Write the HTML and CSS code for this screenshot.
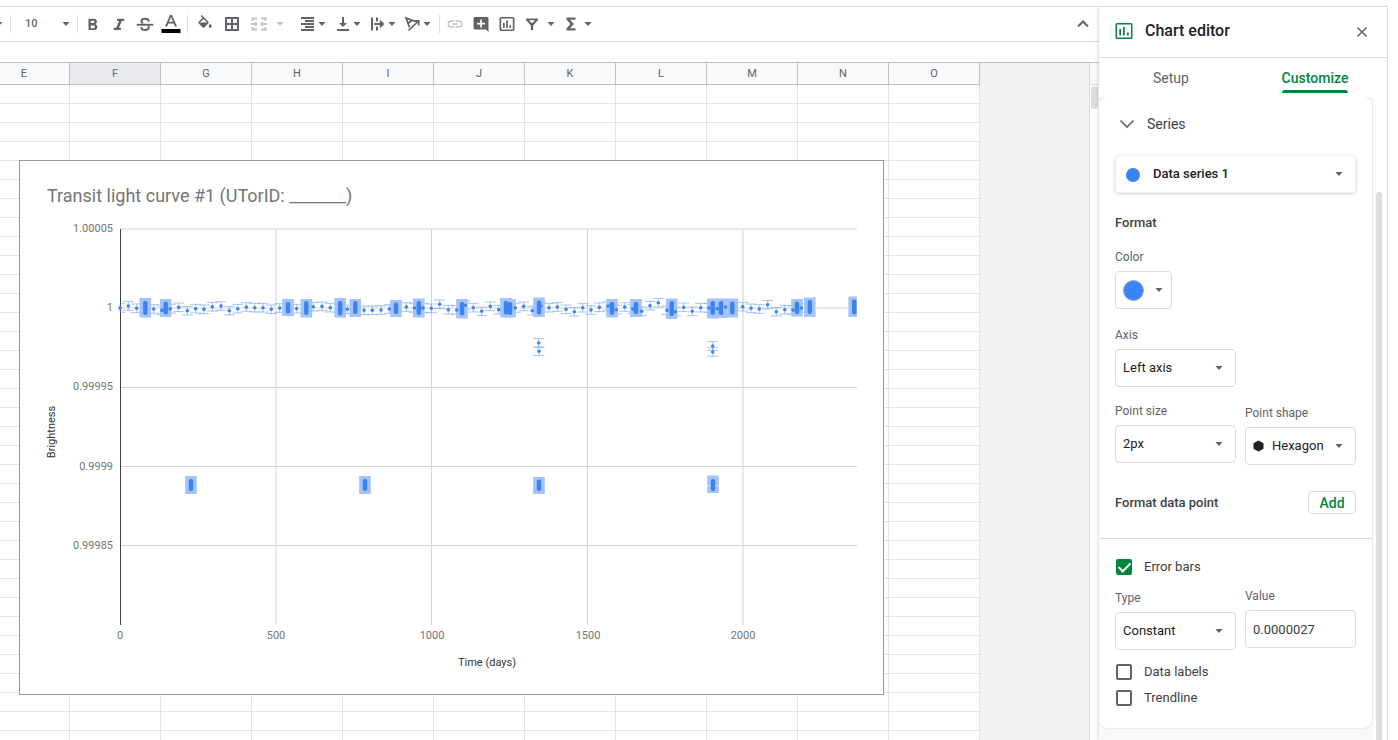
FILE: index.html
```html
<!DOCTYPE html>
<html lang="en">
<head>
<meta charset="utf-8">
<title>Transit light curve</title>
<link rel="stylesheet" href="styles.css">
</head>
<body>
<svg class="defs" width="0" height="0" aria-hidden="true">
  <symbol id="caret" viewBox="0 0 8 4"><path d="M0.5 0h7L4 4z"/></symbol>
</svg>
<div class="app">
  <main class="main">
    <div class="toolbar" role="toolbar" aria-label="Formatting">
      <button class="tool tool-edge" aria-label="Font"><svg class="caret"><use href="#caret"/></svg></button>
      <span class="sep"></span>
      <button class="font-size" aria-label="Font size"><span>10</span><svg class="caret"><use href="#caret"/></svg></button>
      <span class="sep"></span>
      <button class="tool" aria-label="Bold"><svg class="icon" viewBox="0 0 24 24"><path d="M15.6 11.79c.97-.67 1.65-1.77 1.65-2.79 0-2.26-1.75-4-4-4H6v15h8.04c2.09 0 3.71-1.7 3.71-3.79 0-1.52-.86-2.82-2.15-3.42zM9 7.5h3.5c.83 0 1.5.67 1.5 1.5s-.67 1.5-1.5 1.5H9v-3zm4 10H9V14h4c.83 0 1.5.67 1.5 1.5s-.67 2-1.5 2z"/></svg></button>
      <button class="tool" aria-label="Italic"><svg class="icon" viewBox="0 0 24 24"><path d="M9.500 5v3h2.600l-3.800 9H5v3h9.500v-3h-2.600l3.800-9H19V5z"/></svg></button>
      <button class="tool" aria-label="Strikethrough"><svg class="icon" viewBox="0 0 24 24" fill="none" stroke="currentColor" stroke-width="2.500"><path d="M1 13h22"/><path d="M17 9C17 6.500 15 5 12 5S7.200 6.500 7.200 8.200c0 1.200.8 2 2.300 2.600M7 16c0 2.600 2 4 5 4s5-1.400 5-3.600c0-1-.3-1.600-.8-2.200"/></svg></button>
      <button class="tool" aria-label="Text color"><svg class="icon tall" viewBox="0 0 20 20"><path d="M9 1h2l5 11.500h-2.100L12.700 9.500H7.300L6.100 12.500H4zM8 7.700h4L10 2.900z"/><path class="ink" d="M.5 15h19v4H.5z"/></svg></button>
      <span class="sep"></span>
      <div class="group fills">
        <button class="tool" aria-label="Fill color"><svg class="icon" viewBox="0 0 24 24"><path d="M16.560 8.940L7.620 0 6.210 1.410l2.380 2.380-5.150 5.150c-.59.59-.59 1.540 0 2.120l5.500 5.500c.29.29.68.440 1.060.440s.77-.15 1.060-.440l5.500-5.500c.59-.58.59-1.530 0-2.120zM5.210 10L10 5.210 14.790 10zM19 11.500s-2 2.170-2 3.500c0 1.100.9 2 2 2s2-.9 2-2c0-1.330-2-3.500-2-3.500z"/></svg></button>
        <button class="tool" aria-label="Borders"><svg class="icon" viewBox="0 0 18 18" fill="none" stroke="currentColor" stroke-width="2"><path d="M3 3h12v12H3zM9 3v12M3 9h12"/></svg></button>
        <button class="tool faded" aria-label="Merge cells"><svg class="icon" viewBox="0 0 18 18" fill="none" stroke="currentColor" stroke-width="2"><path d="M2.500 6V3.500H7M11 3.500h4.500V6M2.500 12v2.500H7M11 14.500h4.500V12M1 9h5M12 9h5"/><path d="M5 7l2 2-2 2M13 7l-2 2 2 2" stroke-width="1.500"/></svg></button>
        <button class="tool mini faded" aria-label="Merge type"><svg class="caret"><use href="#caret"/></svg></button>
      </div>
      <div class="group aligns">
        <button class="split" aria-label="Horizontal align"><svg class="icon" viewBox="0 0 18 18"><path d="M3 2h13v2H3zM7 5h9v2H7zM3 8h13v2H3zM7 11h9v2H7zM3 14h13v2H3z"/></svg><svg class="caret"><use href="#caret"/></svg></button>
        <button class="split" aria-label="Vertical align"><svg class="icon" viewBox="0 0 18 18"><path d="M4 14h12v2H4zM9 2h2v6h3l-4 4-4-4h3z"/></svg><svg class="caret"><use href="#caret"/></svg></button>
        <button class="split" aria-label="Text wrapping"><svg class="icon" viewBox="0 0 18 18" fill="none" stroke="currentColor" stroke-width="2"><path d="M4 2.500v13M9 2.500v4M9 11.500v4M6 9h9"/><path d="M12 6l3 3-3 3"/></svg><svg class="caret"><use href="#caret"/></svg></button>
        <button class="split" aria-label="Text rotation"><svg class="icon" viewBox="0 0 18 18" fill="none" stroke="currentColor" stroke-width="1.700"><path d="M6.500 12.500L3 3l9.500 3.500M5 8.500L9 5M5.500 15.500L15.500 6M11 5.800h4.700v4.700"/></svg><svg class="caret"><use href="#caret"/></svg></button>
      </div>
      <span class="sep"></span>
      <button class="tool faded" aria-label="Insert link"><svg class="icon" viewBox="0 0 24 24"><path d="M3.900 12c0-1.710 1.390-3.100 3.100-3.100h4V7H7c-2.760 0-5 2.240-5 5s2.240 5 5 5h4v-1.900H7c-1.710 0-3.100-1.390-3.100-3.100zM8 13h8v-2H8v2zm9-6h-4v1.900h4c1.710 0 3.100 1.390 3.100 3.100s-1.390 3.100-3.100 3.100h-4V17h4c2.760 0 5-2.240 5-5s-2.240-5-5-5z"/></svg></button>
      <button class="tool" aria-label="Insert comment"><svg class="icon" viewBox="0 0 18 18"><path fill-rule="evenodd" d="M3 2h12c.8 0 1.500.700 1.500 1.500V17L14 14.500H3c-.8 0-1.500-.7-1.500-1.500V3.500C1.500 2.700 2.200 2 3 2zM8.200 4.500v3.200H5v1.700h3.200v3.100h1.700V9.400H13V7.700H9.900V4.500z"/></svg></button>
      <button class="tool" aria-label="Insert chart"><svg class="icon" viewBox="0 0 18 18"><path fill-rule="evenodd" d="M3 2h12a1.500 1.500 0 0 1 1.500 1.500v11A1.500 1.500 0 0 1 15 16H3a1.500 1.500 0 0 1-1.500-1.500v-11A1.500 1.500 0 0 1 3 2zm.2 1.600v10.800h11.600V3.600zM5 8h1.700v5H5zM8.200 5.500h1.700V13H8.200zM11.400 10H13v3h-1.600z"/></svg></button>
      <button class="tool narrow" aria-label="Create a filter"><svg class="icon" viewBox="0 0 18 18"><path fill-rule="evenodd" d="M3 3.500h12V5l-4.800 5.500V15H7.800v-4.500L3 5zm3 1.700l2.200 2.500h1.600L12 5.200z"/></svg></button>
      <button class="tool mini" aria-label="Filter views"><svg class="caret"><use href="#caret"/></svg></button>
      <button class="tool" aria-label="Functions"><svg class="icon" viewBox="0 0 18 18"><path d="M4.500 2.500h9v2.300H8L11.800 9 8 13.200h5.500v2.300h-9v-2L8.500 9l-4-4.500z"/></svg></button>
      <button class="tool tiny" aria-label="More functions"><svg class="caret"><use href="#caret"/></svg></button>
      <button class="tool hide-menus" aria-label="Hide the menus"><svg class="icon" viewBox="0 0 18 18" fill="none" stroke="currentColor" stroke-width="2"><path d="M4 11.500l5-5 5 5"/></svg></button>
    </div>
    <div class="formula-bar"></div>
    <div class="sheet">
      <div class="grid-area">
        <table class="grid" aria-label="Cells">
          <thead><tr><th>E</th><th class="active">F</th><th>G</th><th>H</th><th>I</th><th>J</th><th>K</th><th>L</th><th>M</th><th>N</th><th>O</th></tr></thead>
          <tbody id="rows"></tbody>
        </table>
        <div class="chart">
          <svg id="plot" viewBox="20 161 863 533" role="img" aria-label="Transit light curve chart">
            <g class="gridlines">
              <path d="M120 229H857M120 308H857M120 387.500H857M120 466.500H857M120 545.500H857"/>
              <path d="M276 229V625M431.500 229V625M587.500 229V625M743 229V625"/>
            </g>
            <path class="axis" d="M120.500 229V625"/>
            <g id="bars" class="bars"></g>
            <path class="gap" d="M707 485.500H719"/>
            <g id="points" class="points"></g>
            <text class="title" x="47" y="202">Transit light curve #1 (UTorID: _______)</text>
            <g class="ticks end">
              <text x="113" y="232">1.00005</text><text x="113" y="311">1</text>
              <text x="113" y="390">0.99995</text><text x="113" y="470">0.9999</text><text x="113" y="549">0.99985</text>
            </g>
            <g class="ticks mid">
              <text x="120" y="639">0</text><text x="276" y="639">500</text><text x="432" y="639">1000</text><text x="588" y="639">1500</text><text x="743" y="639">2000</text>
            </g>
            <g class="names">
              <text x="487" y="666">Time (days)</text>
              <text transform="translate(55 432) rotate(-90)">Brightness</text>
            </g>
          </svg>
        </div>
      </div>
      <div class="sheet-scroll"><div class="sheet-scroll-head"></div><div class="sheet-thumb"></div></div>
    </div>
  </main>

  <aside class="panel">
    <header class="panel-head">
      <svg class="panel-icon" viewBox="0 0 18 18"><path fill-rule="evenodd" d="M2 1h14a1.500 1.500 0 0 1 1.500 1.500v13A1.500 1.500 0 0 1 16 17H2a1.500 1.500 0 0 1-1.500-1.500v-13A1.500 1.500 0 0 1 2 1zm0 1.500v13h14v-13zM4.300 7H6v6.500H4.300zM8 5h1.700v8.500H8zM12 10.500h1.700v3H12z"/></svg>
      <h2>Chart editor</h2>
      <button class="close" aria-label="Close"><svg viewBox="0 0 12 12"><path d="M1.500 1.500l9 9M10.500 1.500l-9 9"/></svg></button>
    </header>
    <div class="tabs" role="tablist">
      <button role="tab" aria-selected="false">Setup</button>
      <button role="tab" aria-selected="true"><span>Customize</span></button>
    </div>
    <div class="panel-body">
      <form class="card">
        <button type="button" class="section"><svg viewBox="0 0 16 10"><path d="M1.500 1.500L8 8l6.500-6.500"/></svg>Series</button>
        <div class="pick series">
          <i class="dot"></i>
          <select aria-label="Series"><option>Data series 1</option></select>
          <svg class="caret"><use href="#caret"/></svg>
        </div>
        <h3 class="format">Format</h3>
        <label class="name" for="color">Color</label>
        <button type="button" class="color" id="color"><i class="swatch"></i><svg class="caret"><use href="#caret"/></svg></button>
        <label class="name axis-name" for="axis">Axis</label>
        <div class="pick half"><select id="axis"><option>Left axis</option></select><svg class="caret"><use href="#caret"/></svg></div>
        <div class="pair point">
          <div><label class="name" for="size">Point size</label>
            <div class="pick"><select id="size"><option>2px</option></select><svg class="caret"><use href="#caret"/></svg></div></div>
          <div class="low"><label class="name" for="shape">Point shape</label>
            <div class="pick shape"><svg class="hex" viewBox="0 0 10 12"><path d="M5 .5l5 2.700v5.600l-5 2.700-5-2.700V3.200z"/></svg><select id="shape"><option>Hexagon</option></select><svg class="caret"><use href="#caret"/></svg></div></div>
        </div>
        <div class="data-point"><h3>Format data point</h3><button type="button" class="add">Add</button></div>
        <hr>
        <label class="check"><input type="checkbox" checked>Error bars</label>
        <div class="pair error">
          <div class="low"><label class="name" for="type">Type</label>
            <div class="pick"><select id="type"><option>Constant</option></select><svg class="caret"><use href="#caret"/></svg></div></div>
          <div><label class="name" for="value">Value</label><input class="value" id="value" type="text" value="0.0000027"></div>
        </div>
        <label class="check labels"><input type="checkbox">Data labels</label>
        <label class="check"><input type="checkbox">Trendline</label>
      </form>
      <div class="panel-thumb"></div>
    </div>
  </aside>
</div>
<script src="chart.js"></script>
</body>
</html>
```

FILE: styles.css
```css
* { box-sizing: border-box; }
body { margin: 0; height: 100vh; overflow: hidden; background: #fff; font: 13px/16px Roboto, Arial, sans-serif; color: #202124; }
button { border: 0; padding: 0; background: none; font: inherit; color: inherit; cursor: pointer; }
h2, h3 { margin: 0; }
.defs { display: block; }
.caret { width: 8px; height: 4px; flex: none; fill: #5f6368; }
.app { height: calc(100vh - 6px); margin: 6px 10px 0 0; border: solid #dadce0; border-width: 1px 1px 0 0; display: flex; }
.main { flex: 1; min-width: 0; display: flex; flex-direction: column; }

.toolbar { display: flex; align-items: center; height: 35px; padding-bottom: 1px; border-bottom: 1px solid #dadce0; color: #5f6368; overflow: hidden; flex: none; }
.tool { width: 26px; height: 26px; flex: none; display: flex; align-items: center; justify-content: center; }
.icon { width: 18px; height: 18px; flex: none; fill: currentColor; }
.icon[fill="none"] { fill: none; }
.icon.tall { width: 20px; height: 20px; }
.ink { fill: #000; }
.tool-edge { width: 12px; margin-left: -5px; justify-content: flex-start; }
.mini { width: 14px; }
.tiny { width: 8px; }
.narrow { width: 24px; }
.faded, .faded .caret { color: #c0c2c5; fill: #c0c2c5; }
.sep { width: 1px; height: 18px; margin: 0 2px 0 3px; background: #dadce0; flex: none; }
.font-size { width: 61px; padding: 0 4px 0 12px; display: flex; align-items: center; justify-content: space-between; font-size: 11px; font-weight: 500; }
.group { display: flex; align-items: center; flex: none; }
.fills { gap: 1px; padding-left: 2px; }
.aligns { padding: 0 2px 0 7px; }
.split { width: 35px; padding-left: 4px; display: flex; align-items: center; gap: 2px; }
.hide-menus { margin: 0 3px 0 auto; }
.formula-bar { height: 20px; flex: none; }

.sheet { flex: 1; min-height: 0; display: flex; border-top: 1px solid #bdbfc1; }
.grid-area { flex: 1; min-width: 0; position: relative; overflow: hidden; background: #f3f3f3; }
.grid { width: 1001px; margin-left: -21px; table-layout: fixed; border-collapse: separate; border-spacing: 0; background: #fff; }
.grid th { height: 22px; padding: 1px 0 0; border: solid #c0c0c0; border-width: 0 1px 1px 0; background: #f8f9fa; color: #5f6368; font-size: 11px; line-height: 16px; font-weight: 400; }
.grid th.active { background: #e8eaed; color: #4a6a9a; }
.grid td { height: 19px; padding: 0; border: solid #e2e3e3; border-width: 0 1px 1px 0; }
.chart { position: absolute; left: 19px; top: 97px; border: 1px solid #999; background: #fff; }
.chart svg { display: block; width: 863px; height: 533px; }
.gridlines { stroke: #d4d4d4; fill: none; }
.axis { stroke: #424242; }
.bars { stroke: #3b83f2; stroke-opacity: .45; fill: #a3c3f9; }
.bars rect { stroke: none; }
.gap { stroke: #d8e6fc; }
.points { fill: #3b83f2; }
.title { font-size: 18px; fill: #757575; }
.ticks { font-size: 11px; fill: #757575; }
.end { text-anchor: end; }
.mid, .names { text-anchor: middle; }
.names { font-size: 11px; fill: #333; }
.sheet-scroll { width: 10px; border-left: 1px solid #d5d7d9; background: #fff; }
.sheet-scroll-head { height: 22px; background: #f8f9fa; border-bottom: 1px solid #dadce0; }
.sheet-thumb { width: 7px; height: 23px; margin: 1px; border-radius: 4px; background: #dadce0; }

.panel { width: 288px; flex: none; display: flex; flex-direction: column; background: #fff; box-shadow: -1px 0 3px rgba(60, 64, 67, .2); clip-path: inset(0 0 0 -6px); position: relative; }
.panel-head { height: 51px; flex: none; padding: 0 19px 2px 16px; display: flex; align-items: center; border-bottom: 1px solid #dadce0; }
.panel-icon { width: 18px; height: 18px; fill: #0b8043; }
.panel-head h2 { flex: 1; margin-left: 12px; font-size: 16px; line-height: 20px; font-weight: 500; }
.close svg { display: block; width: 12px; height: 12px; margin-top: 1px; stroke: #5f6368; stroke-width: 1.500; fill: none; }
.tabs { height: 39px; flex: none; display: flex; }
.tabs button { flex: 1; display: flex; justify-content: center; padding-top: 11px; font-size: 14px; line-height: 18px; color: #5f6368; }
.tabs button[aria-selected="true"] { color: #00853f; font-weight: 500; }
.tabs span { height: 24px; position: relative; }
.tabs span::after { content: ""; position: absolute; left: 0; right: 0; bottom: 0; height: 3px; border-radius: 3px 3px 0 0; background: #00853f; }
.panel-body { flex: 1; min-height: 0; display: flex; align-items: flex-start; gap: 4px; overflow: hidden; background: linear-gradient(90deg, #f8f9fa 274px, #fff 274px); }
.card { flex: 1; min-width: 0; margin-bottom: 10px; padding: 0 16px 22px; border-radius: 8px; background: #fff; box-shadow: 0 0 2px rgba(60, 64, 67, .25); display: flex; flex-direction: column; align-items: stretch; }
.panel-thumb { width: 6px; height: 100%; margin: 95px 5px 0 0; border-radius: 3px 3px 0 0; background: #dadce0; flex: none; }
.section { height: 53px; padding: 0 0 0 4px; display: flex; align-items: center; gap: 12px; font-size: 14px; color: #3c4043; }
.section svg { width: 16px; height: 10px; fill: none; stroke: #5f6368; stroke-width: 1.600; }
.pick { position: relative; height: 38px; border: 1px solid #dadce0; border-radius: 4px; }
.pick select { display: block; appearance: none; width: 100%; height: 100%; padding: 0 24px 0 7px; border: 0; background: none; font: inherit; color: inherit; }
.pick .caret { position: absolute; right: 12px; top: 16px; pointer-events: none; }
.series { margin-top: 5px; border-color: #f1f3f4; box-shadow: 0 1px 3px rgba(60, 64, 67, .25); font-weight: 500; }
.series select { padding-left: 37px; }
.dot { position: absolute; left: 10px; top: 12px; width: 14px; height: 14px; border-radius: 50%; background: #3b83f2; }
.card h3 { font-size: 13px; line-height: 16px; font-weight: 500; color: #3c4043; }
.format { margin-top: 22px; }
.name { display: block; height: 22px; font-size: 12px; line-height: 16px; color: #5f6368; }
.format + .name { margin-top: 18px; }
.color { width: 57px; height: 38px; padding: 0 8px 0 7px; border: 1px solid #dadce0; border-radius: 4px; display: flex; align-items: center; justify-content: space-between; }
.swatch { width: 21px; height: 21px; border-radius: 50%; border: 1px solid #8aacdf; background: #3b83f2; }
.axis-name { margin-top: 18px; }
.half { width: 121px; }
.pair { display: grid; grid-template-columns: 121px 1fr; column-gap: 9px; align-items: start; }
.low { padding-top: 2px; }
.point { margin-top: 16px; }
.shape select { padding-left: 26px; padding-right: 16px; }
.hex { position: absolute; left: 7px; top: 12px; width: 11px; height: 12px; fill: #202124; }
.data-point { margin-top: 26px; display: flex; align-items: center; justify-content: space-between; }
.add { width: 48px; height: 23px; border: 1px solid #dadce0; border-radius: 4px; color: #00853f; font-size: 14px; font-weight: 500; }
hr { align-self: stretch; margin: 24px -16px 0 -15px; border: 0; border-top: 1px solid #dadce0; }
.check { display: flex; align-items: center; gap: 12px; color: #3c4043; margin: 10px 0 0 1px; }
.check input { appearance: none; width: 16px; height: 16px; margin: 0; border: 2px solid #5f6368; border-radius: 2px; position: relative; }
.check input:checked { background: #00853f; border-color: #00853f; }
.check input:checked::after { content: ""; position: absolute; left: 3px; top: -1px; width: 5px; height: 10px; border: solid #fff; border-width: 0 2px 2px 0; transform: rotate(45deg); }
hr + .check { margin-top: 20px; }
.error { margin-top: 13px; }
.value { display: block; width: 100%; height: 38px; padding: 0 7px; border: 1px solid #dadce0; border-radius: 4px; font: inherit; color: #3c4043; }
.labels { margin-top: 14px; }
```

FILE: chart.js
```javascript
const rows = document.getElementById('rows');
for (let r = 0; r < 36; r++) {
  const tr = rows.insertRow();
  for (let c = 0; c < 11; c++) tr.insertCell();
}

// Single observations: [x, y]
const singles = [
  [120, 308], [128.3, 306], [136.7, 308.3], [153.7, 309], [162, 310.3], [170.3, 308.7], [178.7, 307.3], [187.3, 310.7],
  [195.7, 308.7], [204, 309.3], [212.3, 306.7], [221, 306], [229.3, 310.7], [237.7, 308.7], [246.3, 307], [254.7, 307.7],
  [263, 307.7], [271.3, 309.3], [279.7, 308], [296.7, 308.7], [313.3, 306.7], [322, 306.3], [330.3, 307.7], [347.3, 309.3],
  [364, 310.3], [372.3, 310.3], [381, 310], [389.3, 309], [406.3, 307], [414.3, 308], [423, 308], [431.3, 308.3],
  [439.7, 304.3], [448.3, 309.7], [456.7, 310], [465.3, 305.3], [473.3, 307.7], [481.7, 311.3], [490.3, 306.3],
  [498.7, 309.7], [515.3, 308], [523.7, 306.3], [532.3, 310.7], [540.7, 306.3], [549, 307.7], [557.3, 307], [566, 309.3],
  [574.3, 311.7], [582.7, 307.7], [591, 310], [599.3, 307.3], [608, 306], [616.3, 309.7], [624.7, 307], [633, 309],
  [641.7, 311.3], [650, 305.7], [658.3, 302.7], [667, 310.3], [675.3, 311.7], [683.7, 307.3], [692.3, 311.3],
  [700.7, 307.7], [709, 308], [717.3, 308.7], [725.7, 307], [742.7, 306.7], [751, 308.3], [759.3, 309], [767.7, 304.7],
  [776.3, 311.7], [784.7, 309.7], [793, 310], [801.3, 308],
  [538.7, 343], [539, 351.3], [712.7, 346], [712.7, 352]
];

// Dense runs: [x, top of bars, bottom of bars, top of points, bottom of points]
const runs = [
  [145.3, 298, 317.5, 301, 315], [165.7, 299, 317, 301.5, 314.5], [288, 299, 316, 302, 313.5], [306.3, 299, 317.5, 301, 315],
  [340.2, 298, 317.5, 301, 315.5], [355.3, 299, 317, 301, 314], [396, 300, 317, 302.5, 314], [418.8, 298.5, 317.5, 301, 315],
  [462, 299, 318.5, 302, 315.5], [506, 298, 317.5, 301, 314.5], [510, 299, 317.5, 302, 315], [539, 297.5, 317, 300.5, 314.5],
  [612, 299, 317.5, 302, 315], [636, 299, 317, 302, 314], [671.7, 298.5, 319, 301, 316], [712.7, 298.5, 318.5, 301, 315],
  [721, 298.5, 318, 301, 315], [732.3, 298.5, 317.5, 301.5, 314.5], [797, 299, 316.5, 301.5, 314], [809.8, 297.5, 317, 300, 314],
  [854.2, 296.5, 317, 299.5, 314.5],
  [191, 476, 494, 479, 491], [365, 476, 494, 479, 491], [539, 477, 494, 479.5, 491], [713, 475.5, 493, 479, 491]
];

const NS = 'http://www.w3.org/2000/svg';
const bars = document.getElementById('bars');
const points = document.getElementById('points');
const right = 857;
function draw(parent, tag, attrs) {
  const el = document.createElementNS(NS, tag);
  for (const k in attrs) el.setAttribute(k, attrs[k]);
  parent.append(el);
}
for (const [x, y] of singles) {
  const e = 4.3, left = Math.max(x - 5.500, 120);
  draw(bars, 'path', { d: `M${left} ${y - e}H${x + 5.500}M${left} ${y + e}H${x + 5.500}M${x} ${y - e}V${y + e}` });
  draw(points, 'circle', { cx: x, cy: y, r: 1.800 });
}
for (const [x, t, b, pt, pb] of runs) {
  const left = x - 5.800;
  draw(bars, 'rect', { x: left, y: t, width: Math.min(11.600, right - left), height: b - t });
  draw(points, 'rect', { x: x - 2.200, y: pt, width: 4.400, height: pb - pt, rx: 2 });
}
```
